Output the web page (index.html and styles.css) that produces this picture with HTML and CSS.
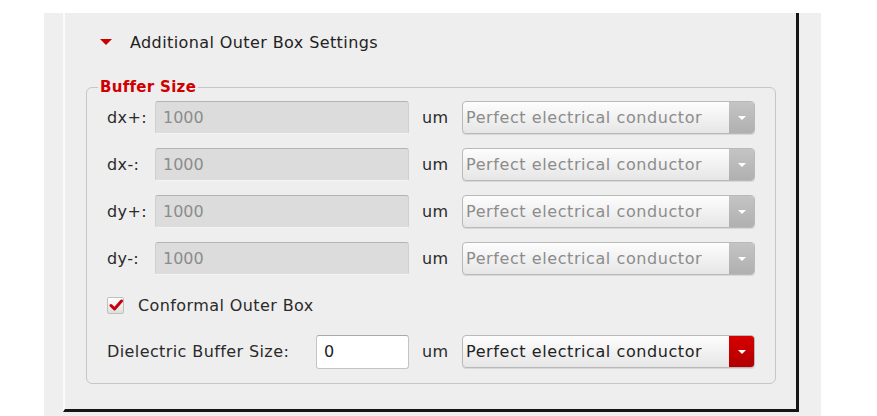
FILE: index.html
```html
<!DOCTYPE html>
<html>
<head>
<meta charset="utf-8">
<link rel="stylesheet" href="styles.css">
</head>
<body>
<div class="outer">
  <div class="strip"></div>
  <div class="panel">
    <div class="header">
      <span class="tri"></span>
      <span class="header-text">Additional Outer Box Settings</span>
    </div>
    <fieldset class="group">
      <legend class="legend">Buffer Size</legend>
      <div class="row">
        <span class="label">dx+:</span>
        <div class="input disabled">1000</div>
        <span class="unit">um</span>
        <div class="combo disabled"><span class="combo-text">Perfect electrical conductor</span><span class="arrow"><span class="arrow-tri"></span></span></div>
      </div>
      <div class="row">
        <span class="label">dx-:</span>
        <div class="input disabled">1000</div>
        <span class="unit">um</span>
        <div class="combo disabled"><span class="combo-text">Perfect electrical conductor</span><span class="arrow"><span class="arrow-tri"></span></span></div>
      </div>
      <div class="row">
        <span class="label">dy+:</span>
        <div class="input disabled">1000</div>
        <span class="unit">um</span>
        <div class="combo disabled"><span class="combo-text">Perfect electrical conductor</span><span class="arrow"><span class="arrow-tri"></span></span></div>
      </div>
      <div class="row">
        <span class="label">dy-:</span>
        <div class="input disabled">1000</div>
        <span class="unit">um</span>
        <div class="combo disabled"><span class="combo-text">Perfect electrical conductor</span><span class="arrow"><span class="arrow-tri"></span></span></div>
      </div>
      <div class="check-row">
        <span class="checkbox"><svg width="14" height="12" viewBox="0 0 14 12"><path d="M2 6.5 L5.5 10 L12.5 2" fill="none" stroke="#c8000a" stroke-width="3" stroke-linecap="round" stroke-linejoin="round"/></svg></span>
        <span class="check-label">Conformal Outer Box</span>
      </div>
      <div class="row last">
        <span class="label wide">Dielectric Buffer Size:</span>
        <div class="input small">0</div>
        <span class="unit">um</span>
        <div class="combo enabled"><span class="combo-text">Perfect electrical conductor</span><span class="arrow"><span class="arrow-tri"></span></span></div>
      </div>
    </fieldset>
  </div>
</div>
</body>
</html>
```
FILE: styles.css
```css
html, body {
  margin: 0;
  padding: 0;
  background: #ffffff;
}
body {
  font-family: "DejaVu Sans", sans-serif;
  font-size: 16px;
  letter-spacing: 0.4px;
  color: #2a2a2a;
}
.outer {
  margin: 13px 0 0 44px;
  width: 777px;
  height: 403px;
  background: #efefef;
  display: flex;
}
.strip {
  width: 19px;
  flex: none;
}
.panel {
  width: 736px;
  height: 399px;
  box-sizing: border-box;
  flex: none;
  border-left: 2px solid #fbfbfb;
  border-right: 3px solid #161616;
  border-bottom: 3px solid #161616;
  background: #eeeeee;
  padding: 0 21px 0 21px;
}
.header {
  display: flex;
  align-items: center;
  height: 58px;
  padding-left: 14px;
}
.tri {
  width: 0;
  height: 0;
  border-left: 6px solid transparent;
  border-right: 6px solid transparent;
  border-top: 6px solid #c80000;
  margin-right: 18px;
}
.header-text {
  color: #222;
}
.group {
  margin: 9px 0 0 0;
  border: 1px solid #c6c6c6;
  border-radius: 6px;
  padding: 7px 20px 10px 20px;
  height: 304px;
  box-sizing: border-box;
}
.legend {
  color: #d00000;
  font-weight: bold;
  font-size: 15px;
  letter-spacing: 0.3px;
  padding: 0 2px;
  margin-left: -9px;
  line-height: 14px;
}
.row {
  display: flex;
  align-items: center;
  height: 33px;
  margin-bottom: 14px;
}
.label {
  width: 48px;
  flex: none;
}
.label.wide {
  width: 209px;
}
.input {
  width: 254px;
  height: 33px;
  box-sizing: border-box;
  flex: none;
  border-radius: 3px;
  padding: 0 7px;
  display: flex;
  align-items: center;
  letter-spacing: 0;
}
.input.disabled {
  background: #dcdcdc;
  color: #8c8c8c;
  border-top: 1px solid #b4b4b4;
  border-left: 1px solid #cfcfcf;
  border-right: 1px solid #cfcfcf;
  border-bottom: 1px solid #f4f4f4;
}
.input.small {
  width: 93px;
  height: 34px;
  background: #ffffff;
  color: #222;
  border: 1px solid #c4c4c4;
  border-top-color: #a8a8a8;
}
.unit {
  width: 40px;
  flex: none;
  padding-left: 13px;
  color: #2a2a2a;
}
.combo {
  width: 293px;
  height: 33px;
  box-sizing: border-box;
  flex: none;
  display: flex;
  border: 1px solid #b9b9b9;
  border-radius: 4px;
  background: linear-gradient(#fdfdfd, #e6e6e6);
  overflow: hidden;
  box-shadow: 0 1px 0 #d8d8d8;
}
.combo-text {
  flex: 1;
  display: flex;
  align-items: center;
  padding-left: 3px;
  white-space: nowrap;
  letter-spacing: 0.58px;
}
.combo.disabled .combo-text {
  color: #8c8c8c;
}
.combo.enabled .combo-text {
  color: #222;
}
.arrow {
  width: 25px;
  flex: none;
  display: flex;
  align-items: center;
  justify-content: center;
}
.combo.disabled .arrow {
  background: linear-gradient(#c4c4c4, #b0b0b0);
}
.combo.enabled .arrow {
  background: linear-gradient(#d80000, #b00000);
}
.arrow-tri {
  width: 0;
  height: 0;
  border-left: 4px solid transparent;
  border-right: 4px solid transparent;
  border-top: 4px solid #ffffff;
}
.check-row {
  display: flex;
  align-items: center;
  height: 32px;
  margin: 7px 0 14px 0;
}
.checkbox {
  width: 17px;
  height: 17px;
  box-sizing: border-box;
  border: 1px solid #c0c0c0;
  border-radius: 2px;
  background: linear-gradient(#ffffff, #dedede);
  display: flex;
  align-items: center;
  justify-content: center;
  margin-right: 14px;
}
.row.last {
  margin-bottom: 0;
}
```
